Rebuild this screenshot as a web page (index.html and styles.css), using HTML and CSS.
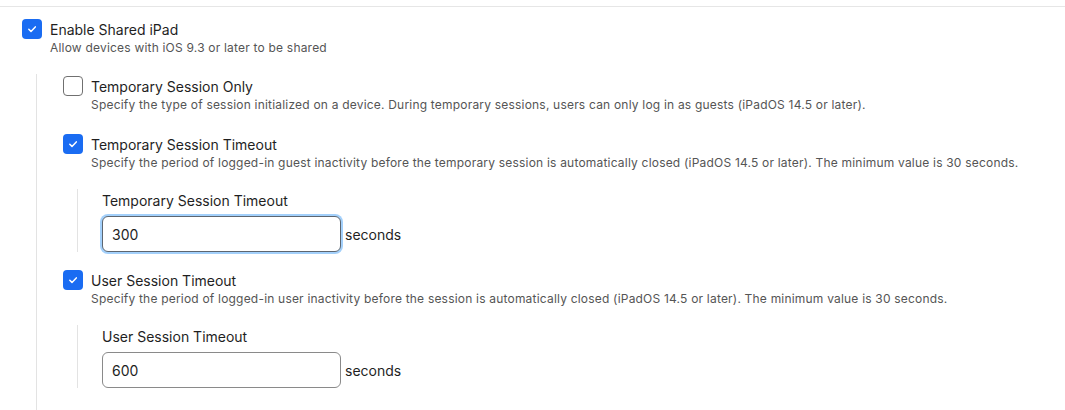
FILE: index.html
```html
<!DOCTYPE html>
<html>
<head>
    <title>Shared iPad Settings</title>
    <link rel="stylesheet" href="styles.css">
</head>
<body>
    <div class="page">
        <div class="rule"></div>

        <div class="section">
            <div class="option-head">
                <span class="check on">
                    <svg viewBox="0 0 20 20" width="20" height="20"><path d="M6.8 10.2l2.2 2.2 4.3-4.5"/></svg>
                </span>
                <div class="option-text">
                    <div class="title">Enable Shared iPad</div>
                    <div class="desc">Allow devices with iOS 9.3 or later to be shared</div>
                </div>
            </div>

            <div class="children outer">
                <div class="option">
                    <div class="option-head">
                        <span class="check"></span>
                        <div class="option-text">
                            <div class="title">Temporary Session Only</div>
                            <div class="desc">Specify the type of session initialized on a device. During temporary sessions, users can only log in as guests (iPadOS 14.5 or later).</div>
                        </div>
                    </div>
                </div>

                <div class="option">
                    <div class="option-head">
                        <span class="check on">
                            <svg viewBox="0 0 20 20" width="20" height="20"><path d="M6.8 10.2l2.2 2.2 4.3-4.5"/></svg>
                        </span>
                        <div class="option-text">
                            <div class="title">Temporary Session Timeout</div>
                            <div class="desc">Specify the period of logged-in guest inactivity before the temporary session is automatically closed (iPadOS 14.5 or later). The minimum value is 30 seconds.</div>
                        </div>
                    </div>
                    <div class="children nested">
                        <label class="field-label" for="temp-timeout">Temporary Session Timeout</label>
                        <div class="field-row">
                            <input id="temp-timeout" class="field focused" type="text" value="300">
                            <span class="unit">seconds</span>
                        </div>
                    </div>
                </div>

                <div class="option">
                    <div class="option-head">
                        <span class="check on">
                            <svg viewBox="0 0 20 20" width="20" height="20"><path d="M6.8 10.2l2.2 2.2 4.3-4.5"/></svg>
                        </span>
                        <div class="option-text">
                            <div class="title">User Session Timeout</div>
                            <div class="desc">Specify the period of logged-in user inactivity before the session is automatically closed (iPadOS 14.5 or later). The minimum value is 30 seconds.</div>
                        </div>
                    </div>
                    <div class="children nested">
                        <label class="field-label" for="user-timeout">User Session Timeout</label>
                        <div class="field-row">
                            <input id="user-timeout" class="field" type="text" value="600">
                            <span class="unit">seconds</span>
                        </div>
                    </div>
                </div>

                <div class="option">
                    <div class="field-label">Number Of Users</div>
                </div>
            </div>
        </div>
    </div>
</body>
</html>
```

FILE: styles.css
```css
body { margin: 0; font-family: Inter, "Noto Sans", sans-serif; color: #222; background: #fff; }
.page { padding-top: 6px; height: 404px; overflow: hidden; }
.rule { border-top: 1px solid #e6e6e6; }
.section { padding: 12px 0 0 22px; }

.option-head { display: flex; gap: 8px; align-items: flex-start; padding-bottom: 4px; }
.option-text { display: flex; flex-direction: column; padding-top: 1px; }
.title { font-size: 14px; line-height: 20px; color: #1f1f1f; }
.desc { font-size: 12px; line-height: 15px; letter-spacing: 0.2px; color: #555; }

.check { flex: none; width: 18px; height: 18px; border: 1px solid #707070; border-radius: 4px; background: #fff; }
.check.on { width: 20px; height: 20px; border: 0; background: #1a6cf2; }
.check svg { display: block; fill: none; stroke: #fff; stroke-width: 1.5; stroke-linecap: round; stroke-linejoin: round; }

.children { border-left: 1px solid #e3e3e3; margin-left: 14px; }
.outer { margin-top: 15px; padding: 2px 0 0 26px; }
.nested { margin-top: 15px; padding-left: 24px; }
.option { margin-bottom: 18px; }

.field-label { display: block; font-size: 14px; line-height: 18px; color: #1f1f1f; margin-bottom: 6px; padding-top: 3px; }
.field-row { display: flex; align-items: center; gap: 4px; }
.field { box-sizing: border-box; width: 239px; height: 36px; margin: 0; padding: 0 9px; border: 1px solid #8a8a8a; border-radius: 6px; font-family: inherit; font-size: 14px; color: #1f1f1f; outline: none; }
.field.focused { border-color: #5d6670; box-shadow: 0 0 0 2px #a3d0fb; }
.unit { font-size: 14px; color: #1f1f1f; }
```
